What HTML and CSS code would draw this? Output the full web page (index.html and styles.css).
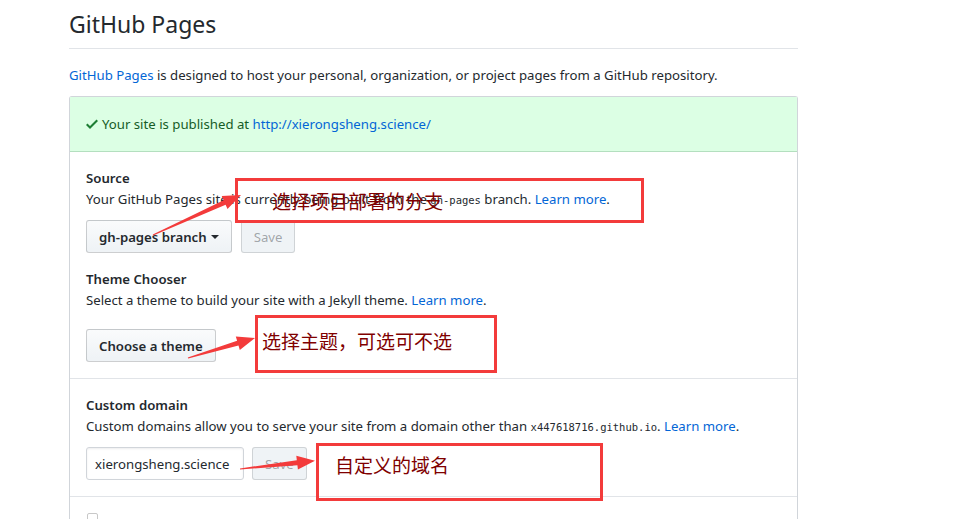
FILE: index.html
```html
<!DOCTYPE html>
<html lang="en">
<head>
<meta charset="utf-8">
<title>GitHub Pages</title>
<link rel="stylesheet" href="styles.css">
</head>
<body>
<div class="page">
  <div class="subhead"><h2 class="subhead-title">GitHub Pages</h2></div>
  <p class="intro"><a href="#">GitHub Pages</a> is designed to host your personal, organization, or project pages from a GitHub repository.</p>
  <div class="box">
    <div class="flash">
      <svg class="check" viewBox="0 0 12 16" width="12" height="16"><path fill="#1e7e34" d="M12 5l-8 8-4-4 1.5-1.5L4 10l6.5-6.5L12 5z"/></svg>
      <span>Your site is published at <a href="#">http://xierongsheng.science/</a></span>
    </div>
    <div class="section">
      <h4 class="sec-title">Source</h4>
      <p class="sec-desc">Your GitHub Pages site is currently being built from the <code>gh-pages</code> branch. <a href="#">Learn more</a>.</p>
      <div class="row">
        <button class="btn">gh-pages branch <span class="caret"></span></button>
        <button class="btn disabled">Save</button>
      </div>
      <h4 class="sec-title second">Theme Chooser</h4>
      <p class="sec-desc">Select a theme to build your site with a Jekyll theme. <a href="#">Learn more</a>.</p>
      <div class="row row-theme">
        <button class="btn">Choose a theme</button>
      </div>
    </div>
    <div class="section">
      <h4 class="sec-title">Custom domain</h4>
      <p class="sec-desc">Custom domains allow you to serve your site from a domain other than <code>x447618716.github.io</code>. <a href="#">Learn more</a>.</p>
      <div class="row row-domain">
        <input class="field" type="text" value="xierongsheng.science">
        <button class="btn disabled">Save</button>
      </div>
    </div>
    <div class="section last">
      <span class="checkbox"></span>
    </div>
  </div>
</div>

<div class="note note-1">选择项目部署的分支</div>
<div class="note note-2">选择主题，可选可不选</div>
<div class="note note-3">自定义的域名</div>
<svg class="arrows" width="968" height="519" viewBox="0 0 968 519">
  <polygon fill="#f33b3b" points="153.2,235.5 225.6,204.8 227.5,208.9 241,195 221.7,196.1 223.6,200.2 152.8,234.5"/>
  <polygon fill="#f33b3b" points="188.2,358.5 238.5,345.6 239.8,349.9 255,338 235.8,336.5 237.1,340.8 187.8,357.5"/>
  <polygon fill="#f33b3b" points="240,469.6 297.4,465.2 297.9,469.6 315,460.7 296.3,455.7 296.8,460.2 240,468.4"/>
</svg>
</body>
</html>
```
FILE: styles.css
```css
* { box-sizing: border-box; }
html, body { margin: 0; padding: 0; background: #fff; }
body {
  font-family: "Noto Sans", "Open Sans", sans-serif;
  font-size: 13.2px;
  color: #24292e;
  line-height: 21px;
  overflow: hidden;
  height: 519px;
}
a { color: #0366d6; text-decoration: none; }
.page {
  width: 798px;
  padding: 6px 0 0 69px;
}
.subhead {
  border-bottom: 1px solid #e1e4e8;
  padding-bottom: 6px;
}
.subhead-title {
  margin: 0;
  font-size: 23px;
  font-weight: 400;
  line-height: 36px;
}
.intro { margin: 16px 0 10px; white-space: nowrap; }
.box {
  border: 1px solid #d1d5da;
  border-bottom: 0;
  border-radius: 3px 3px 0 0;
}
.flash {
  background: #dcffe4;
  border-bottom: 1px solid #b4dfbf;
  color: #165c26;
  padding: 15px 16px;
  line-height: 24px;
  display: flex;
  align-items: center;
  gap: 4px;
}
.check { width: 12px; height: 16px; }
.section {
  padding: 16px 16px 16px;
  border-bottom: 1px solid #e1e4e8;
}
.section.last { border-bottom: 0; padding-top: 16px; height: 30px; }
.sec-title {
  margin: 0;
  font-size: 13.2px;
  font-weight: 600;
  line-height: 21px;
}
.sec-title.second { margin-top: 16px; }
.sec-desc { margin: 0; white-space: nowrap; height: 21px; }
code {
  font-family: "DejaVu Sans Mono", monospace;
  font-size: 10.5px;
  line-height: 1;
}
.row { display: flex; gap: 9px; margin-top: 10px; }
.row-theme { margin-top: 18px; }
.row-domain { gap: 8px; }
.btn {
  font-family: inherit;
  font-size: 13.2px;
  font-weight: 600;
  color: #24292e;
  height: 33px;
  padding: 0 12px;
  background: linear-gradient(#fafbfc, #eff3f6 90%);
  border: 1px solid rgba(27,31,35,0.2);
  border-radius: 3px;
  line-height: 20px;
  display: inline-flex;
  align-items: center;
}
.btn.disabled {
  color: rgba(36,41,46,0.4);
  background: #eff3f6;
  border-color: rgba(27,31,35,0.15);
  font-weight: 400;
}
.caret {
  display: inline-block;
  width: 0; height: 0;
  margin-left: 4px;
  border-top: 4px solid #24292e;
  border-left: 4px solid transparent;
  border-right: 4px solid transparent;
}
.field {
  width: 158px;
  height: 33px;
  font-family: inherit;
  font-size: 13.2px;
  color: #24292e;
  padding: 0 8px;
  border: 1px solid #d1d5da;
  border-radius: 3px;
  box-shadow: inset 0 1px 2px rgba(27,31,35,0.075);
}
.checkbox {
  display: block;
  width: 11px; height: 11px;
  border: 1px solid #c8c8c8;
  border-radius: 2px;
  margin-left: 1px;
}
.note {
  position: absolute;
  border: 3px solid #f33b3b;
  color: #800000;
  font-family: "Noto Sans CJK SC", sans-serif;
  font-size: 19px;
  line-height: 24px;
}
.note-1 { left: 235px; top: 178px; width: 409px; height: 45px; padding: 8px 0 0 34px; }
.note-2 { left: 255px; top: 315px; width: 242px; height: 58px; padding: 11px 0 0 4px; }
.note-3 { left: 316px; top: 443px; width: 287px; height: 58px; padding: 7px 0 0 16px; }
.arrows { position: absolute; left: 0; top: 0; pointer-events: none; }
```
